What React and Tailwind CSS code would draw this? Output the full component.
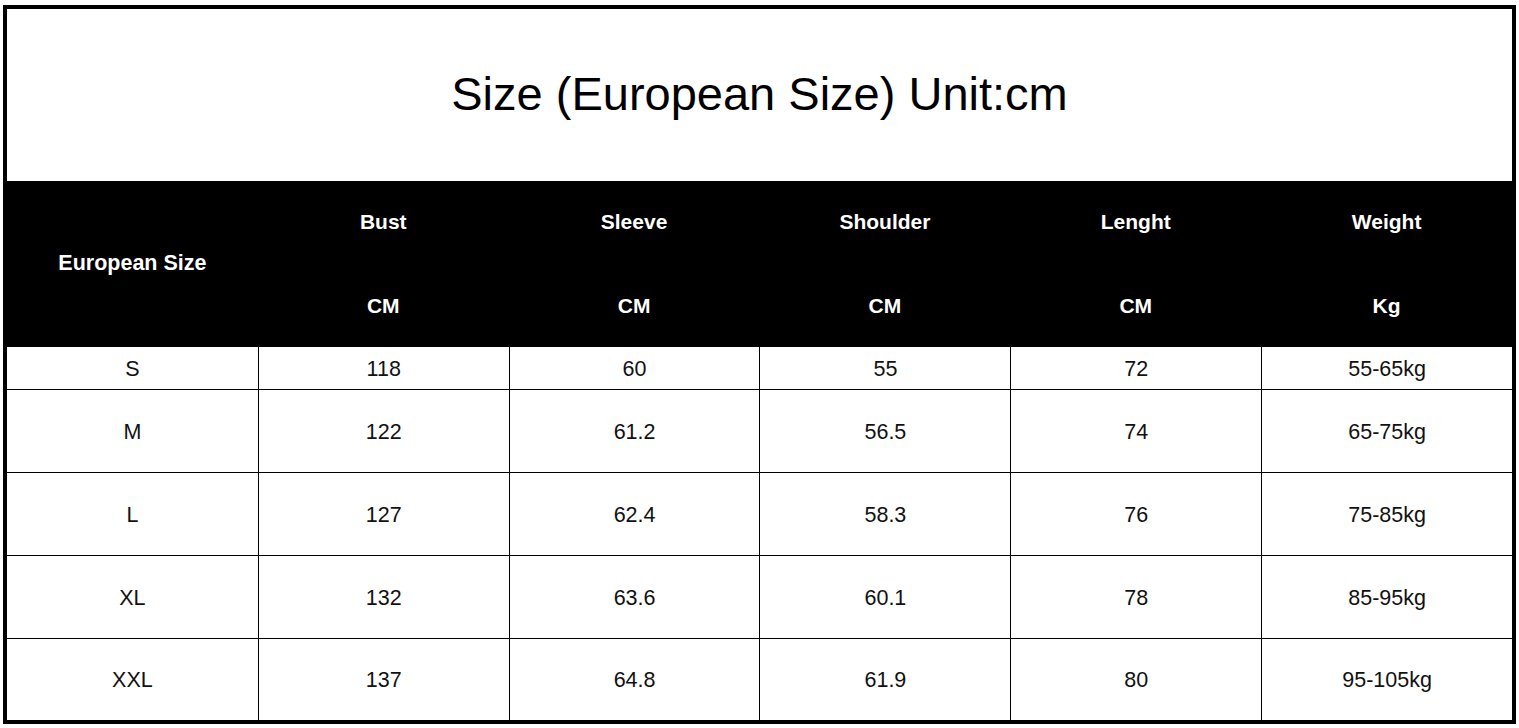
import React from "react";

const cols = [
  ["Bust", "CM"],
  ["Sleeve", "CM"],
  ["Shoulder", "CM"],
  ["Lenght", "CM"],
  ["Weight", "Kg"],
];

const rows = [
  { h: "h-[43px]", v: ["S", "118", "60", "55", "72", "55-65kg"] },
  { h: "h-[83px]", v: ["M", "122", "61.2", "56.5", "74", "65-75kg"] },
  { h: "h-[83px]", v: ["L", "127", "62.4", "58.3", "76", "75-85kg"] },
  { h: "h-[83px]", v: ["XL", "132", "63.6", "60.1", "78", "85-95kg"] },
  { h: "h-[81px]", v: ["XXL", "137", "64.8", "61.9", "80", "95-105kg"] },
];

export default function App() {
  return (
    <div
      className="w-[1519px] h-[728px] bg-white pl-[3px] pt-[5px]"
      style={{ fontFamily: '"Liberation Sans", Arial, sans-serif' }}
    >
      <div className="w-[1513px] h-[719px] border-4 border-black flex flex-col">
        <div className="h-[172px] pb-[3px] flex items-center justify-center">
          <span className="text-[47px] leading-none text-black">
            Size (European Size) Unit:cm
          </span>
        </div>
        <div className="h-[166px] bg-black grid grid-cols-6 text-white font-bold text-[21px] leading-none">
          <div className="flex items-center justify-center text-[21.5px]">European Size</div>
          {cols.map(([a, b]) => (
            <div key={a} className="flex flex-col">
              <div className="h-[83px] pb-[2px] flex items-center justify-center">{a}</div>
              <div className="h-[83px] pb-[1px] flex items-center justify-center">{b}</div>
            </div>
          ))}
        </div>
        <div className="flex flex-col text-[21.5px] leading-none text-[#111]">
          {rows.map((r, i) => (
            <div
              key={r.v[0]}
              className={`${r.h} grid grid-cols-6 ${i < rows.length - 1 ? "border-b border-black" : ""}`}
            >
              {r.v.map((c, j) => (
                <div
                  key={j}
                  className={`flex items-center justify-center pt-[3px] ${j > 0 ? "border-l border-black" : ""}`}
                >
                  {c}
                </div>
              ))}
            </div>
          ))}
        </div>
      </div>
    </div>
  );
}
